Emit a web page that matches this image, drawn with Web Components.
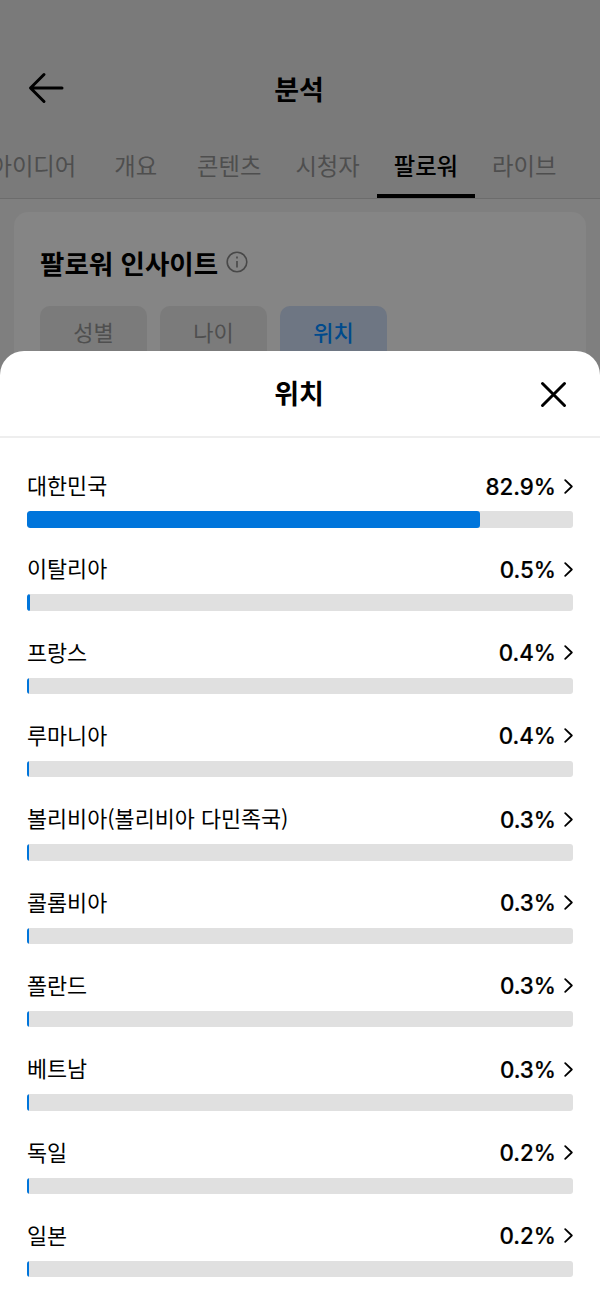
<!DOCTYPE html>
<html lang="ko">
<head>
<meta charset="utf-8">
<style>
  html, body { margin: 0; padding: 0; }
  body { width: 600px; height: 1300px; overflow: hidden; font-family: "Noto Sans CJK KR", sans-serif; }
</style>
</head>
<body>
<analytics-page></analytics-page>

<script>
const KR = '"Noto Sans CJK KR", sans-serif';

class TabBar extends HTMLElement {
    constructor() {
        super();
        this.attachShadow({ mode: 'open' });
    }

    connectedCallback() {
        const tabs = ['아이디어', '개요', '콘텐츠', '시청자', '팔로워', '라이브'];
        this.shadowRoot.innerHTML = `
            <style>
                :host { display: flex; height: 64px; margin-left: -26.5px; border-bottom: 1px solid #6c6c6c; width: 680px; }
                div { padding: 0 17px; height: 60px; line-height: 62px; font-size: 23.3px; color: #4e4e4e; white-space: nowrap; border-bottom: 4px solid transparent; }
                div:nth-of-type(1) { padding-right: 19px; }
                div:nth-of-type(2) { padding: 0 21px 0 19px; }
                div:nth-of-type(3) { padding-left: 19px; }
                .on { color: #000; font-weight: 500; border-bottom-color: #000; }
            </style>
            ${tabs.map(t => `<div class="${t === '팔로워' ? 'on' : ''}">${t}</div>`).join('')}
        `;
    }
}

class AnalyticsPage extends HTMLElement {
    constructor() {
        super();
        this.attachShadow({ mode: 'open' });
    }

    connectedCallback() {
        this.shadowRoot.innerHTML = `
            <style>
                :host { display: block; position: relative; width: 600px; height: 1300px; overflow: hidden; background: #7a7a7a; font-family: ${KR}; }
                header { height: 134px; padding-top: 44px; box-sizing: border-box; display: flex; justify-content: center; align-items: center; position: relative; }
                header h1 { margin: 0 2px 2px 0; font-size: 27px; font-weight: 700; color: #000; }
                header svg { position: absolute; left: 27px; top: 71px; }
                .body { background: #7f7f7f; padding: 13px 14px 0; height: 1102px; box-sizing: border-box; }
                .card { background: #858585; border-radius: 14px; padding: 29px 26px; height: 400px; box-sizing: border-box; }
                .title { display: flex; align-items: center; gap: 8px; height: 42px; font-size: 26.5px; font-weight: 700; color: #000; }
                .chips { display: flex; gap: 13px; margin-top: 23px; }
                .chip { width: 107px; height: 60px; border-radius: 10px; background: #7b7b7b; color: #4f4f4f; font-size: 22px; text-align: center; line-height: 50px; }
                .chip.on { background: #6e7683; color: #004a8c; font-weight: 500; }
            </style>
            <header>
                <svg width="38" height="34" viewBox="0 0 38 34" fill="none" stroke="#000" stroke-width="3" stroke-linecap="round" stroke-linejoin="round"><path d="M35 17H4M17 3.5 3.5 17 17 30.5"/></svg>
                <h1>분석</h1>
            </header>
            <tab-bar></tab-bar>
            <div class="body">
                <div class="card">
                    <div class="title">팔로워 인사이트
                        <svg width="22" height="22" viewBox="0 0 22 22" fill="none" stroke="#484848" stroke-width="1.6"><circle cx="11" cy="11" r="9.8"/><path d="M11 10v6.5M11 5.6v1.8"/></svg>
                    </div>
                    <div class="chips"><div class="chip">성별</div><div class="chip">나이</div><div class="chip on">위치</div></div>
                </div>
            </div>
            <location-sheet></location-sheet>
        `;
    }
}

class LocationSheet extends HTMLElement {
    constructor() {
        super();
        this.attachShadow({ mode: 'open' });
    }

    connectedCallback() {
        const rows = [
            ['대한민국', '82.9%', 83],
            ['이탈리아', '0.5%', 0.5],
            ['프랑스', '0.4%', 0.4],
            ['루마니아', '0.4%', 0.4],
            ['볼리비아(볼리비아 다민족국)', '0.3%', 0.3],
            ['콜롬비아', '0.3%', 0.3],
            ['폴란드', '0.3%', 0.3],
            ['베트남', '0.3%', 0.3],
            ['독일', '0.2%', 0.2],
            ['일본', '0.2%', 0.2]
        ];
        this.shadowRoot.innerHTML = `
            <style>
                :host { display: block; position: absolute; left: 0; top: 351px; width: 600px; height: 949px; background: #fff; border-radius: 24px 24px 0 0; font-family: ${KR}; }
                .head { height: 85px; border-bottom: 2px solid #eeeeee; display: flex; align-items: center; justify-content: center; position: relative; }
                .head h2 { margin: 0 2px 2px 0; font-size: 27px; font-weight: 700; color: #000; }
                .head svg { position: absolute; left: 539px; top: 29px; }
                .list { padding: 8px 27px 0; }
            </style>
            <div class="head">
                <h2>위치</h2>
                <svg width="29" height="29" viewBox="0 0 29 29" fill="none" stroke="#000" stroke-width="3" stroke-linecap="round"><path d="M3.5 3.5 25.5 25.5M25.5 3.5 3.5 25.5"/></svg>
            </div>
            <div class="list">
                ${rows.map(r => `<location-row value="${r[1]}" percent="${r[2]}">${r[0]}</location-row>`).join('')}
            </div>
        `;
    }
}

class LocationRow extends HTMLElement {
    constructor() {
        super();
        this.attachShadow({ mode: 'open' });
    }

    connectedCallback() {
        const value = this.getAttribute('value') || '';
        const percent = this.getAttribute('percent') || '0';
        this.shadowRoot.innerHTML = `
            <style>
                :host { display: block; height: 83.33px; box-sizing: border-box; padding-top: 23px; color: #000; }
                .top { display: flex; align-items: center; justify-content: space-between; height: 34px; font-size: 21.8px; }
                .label { margin-top: -3px; }
                .val { display: flex; align-items: center; gap: 8px; font-family: Inter, sans-serif; font-size: 22.3px; font-weight: 500; -webkit-text-stroke: 0.2px #000; }
                .track { margin-top: 8px; height: 16.5px; border-radius: 3px; background: #e0e0e0; overflow: hidden; }
                .fill { height: 100%; min-width: 1.5px; background: #0075db; border-radius: 3px; width: ${percent}%; }
            </style>
            <div class="top">
                <span class="label"><slot></slot></span>
                <span class="val">${value}
                    <svg width="9" height="15" viewBox="0 0 9 15" fill="none" stroke="#000" stroke-width="1.8" stroke-linecap="round" stroke-linejoin="round"><path d="M1.2 1.2 7.8 7.5 1.2 13.8"/></svg>
                </span>
            </div>
            <div class="track"><div class="fill"></div></div>
        `;
    }
}

customElements.define('tab-bar', TabBar);
customElements.define('location-row', LocationRow);
customElements.define('location-sheet', LocationSheet);
customElements.define('analytics-page', AnalyticsPage);
</script>
</body>
</html>
